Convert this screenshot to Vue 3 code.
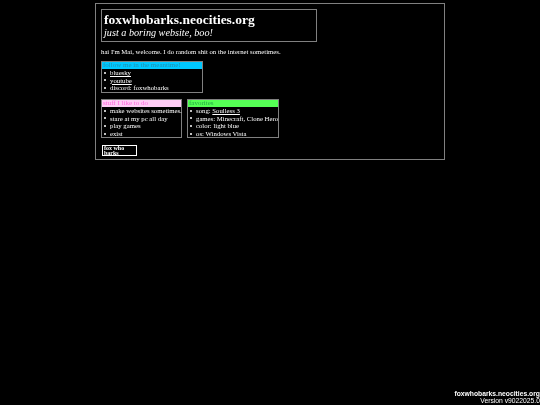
<script setup>
const follow = [
  { text: 'bluesky', link: true },
  { text: 'youtube', link: true },
  { text: 'discord: foxwhobarks' },
];
const stuff = ['make websites sometimes.', 'stare at my pc all day', 'play games', 'exist'];
</script>

<template>
  <div class="page">
    <div class="main">
      <div class="header">
        <h1 class="title">foxwhobarks.neocities.org</h1>
        <h2 class="subtitle">just a boring website, boo!</h2>
      </div>
      <p class="intro">hai I'm Mai, welcome. I do random shit on the internet sometimes.</p>

      <div class="box follow">
        <div class="boxTitle blue">follow me in the meantime!</div>
        <ul>
          <li v-for="item in follow" :key="item.text">
            <a v-if="item.link" href="#">{{item.text}}</a>
            <span v-else>{{item.text}}</span>
          </li>
        </ul>
      </div>

      <div class="row">
        <div class="box stuff">
          <div class="boxTitle pink">stuff I like to do</div>
          <ul>
            <li v-for="item in stuff" :key="item"><span>{{item}}</span></li>
          </ul>
        </div>
        <div class="box favorites">
          <div class="boxTitle green">favorites</div>
          <ul>
            <li><span>song: <a href="#">Soulless 3</a></span></li>
            <li><span>games: Minecraft, Clone Hero</span></li>
            <li><span>color: light blue</span></li>
            <li><span>os: Windows Vista</span></li>
          </ul>
        </div>
      </div>

      <div class="badge">fox who<br>barks</div>
    </div>

    <div class="version">
      <strong>foxwhobarks.neocities.org</strong>
      <span>Version v9022025.0</span>
    </div>
  </div>
</template>

<style>
html, body {
  background: #000;
}
</style>

<style scoped>
.page {
  height: 405px;
  padding-top: 3px;
  box-sizing: border-box;
  overflow: hidden;
  color: #fff;
  font-family: "Liberation Serif", serif;
  will-change: opacity;
}
.main {
  box-sizing: border-box;
  width: 350px;
  height: 157px;
  margin-left: 95px;
  padding: 5px;
  border: 1px solid #808080;
}
.header {
  box-sizing: border-box;
  width: 216px;
  height: 33px;
  padding: 3px 2px;
  border: 1px solid #808080;
}
.title {
  margin: 0;
  font-size: 13.5px;
  line-height: 13px;
  font-weight: bold;
}
.subtitle {
  margin: 0;
  font-size: 10.2px;
  line-height: 14px;
  font-style: italic;
  font-weight: normal;
}
.intro {
  margin: 5px 0 5px;
  font-size: 6.75px;
  line-height: 9px;
}
.box {
  box-sizing: border-box;
  border: 1px solid #808080;
  font-size: 6.75px;
  line-height: 7.6px;
}
.follow {
  width: 102px;
  height: 32px;
}
.stuff {
  width: 81px;
  height: 39px;
}
.favorites {
  width: 92px;
  height: 39px;
}
.boxTitle {
  height: 7px;
  padding-left: 1px;
  font-size: 7px;
  line-height: 7px;
}
.blue {
  background: #00c8ff;
  color: #2090b0;
}
.pink {
  background: #ffccf5;
  color: #ff66dd;
}
.green {
  background: #55ff55;
  color: #22aa44;
}
ul {
  margin: 0;
  padding: 0 0 0 2px;
  list-style: none;
}
li {
  display: flex;
  align-items: center;
  gap: 4px;
  white-space: nowrap;
}
li::before {
  content: "";
  flex: none;
  width: 2px;
  height: 2px;
  border-radius: 50%;
  background: #fff;
}
a {
  color: #fff;
  text-decoration: underline;
}
.row {
  display: flex;
  gap: 5px;
  margin-top: 6px;
}
.badge {
  box-sizing: border-box;
  width: 35px;
  height: 11px;
  margin: 7px 0 0 1px;
  padding-left: 1px;
  border: 1px solid #fff;
  font-size: 6px;
  line-height: 4.5px;
  font-weight: bold;
  overflow: hidden;
}
.version {
  position: fixed;
  right: 0;
  bottom: 0;
  display: flex;
  flex-direction: column;
  align-items: flex-end;
  font-family: "Liberation Sans", Arial, sans-serif;
  font-size: 6.75px;
  line-height: 7.6px;
}
</style>
